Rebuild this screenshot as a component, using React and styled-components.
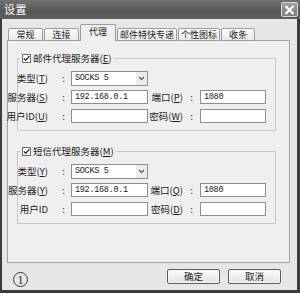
import React from "react";
import styled, { createGlobalStyle } from "styled-components";

const Global = createGlobalStyle`
    html, body {
        margin: 0;
        padding: 0;
    }
    body {
        width: 300px;
        height: 293px;
        overflow: hidden;
        background: #e6e6e6;
        font-family: "Noto Sans CJK SC", "Liberation Sans", sans-serif;
        color: #1c1c1c;
    }
`;

const Window = styled.div`
    width: 300px;
    height: 293px;
    display: flex;
    flex-direction: column;
    box-sizing: border-box;
`;

const TitleBar = styled.div`
    height: 19px;
    flex: none;
    display: flex;
    align-items: center;
    justify-content: space-between;
    padding: 0 2px 0 4px;
    background: linear-gradient(to bottom, #727272, #575757 60%, #5d5d5d);
    color: #fff;
`;

const Title = styled.span`
    font-size: 11px;
    line-height: 19px;
    letter-spacing: 0.5px;
`;

const CloseButton = styled.div`
    width: 17px;
    height: 15px;
    box-sizing: border-box;
    border: 1px solid #d8d8d8;
    border-radius: 2px;
    background: linear-gradient(to bottom, #a0a0a0, #7c7c7c);
    display: flex;
    align-items: center;
    justify-content: center;
`;

const Body = styled.div`
    flex: 1;
    display: flex;
    flex-direction: column;
    border-left: 2px solid #3c3c3c;
    border-right: 3px solid #3c3c3c;
    border-bottom: 3px solid #3c3c3c;
    padding: 5px 7px 0 5px;
    background: #e7e7e7;
`;

const TabStrip = styled.div`
    height: 17px;
    display: flex;
    align-items: flex-end;
    gap: 1px;
    padding-left: 1px;
    margin-bottom: -1px;
    position: relative;
    z-index: 1;
`;

const Tab = styled.div`
    width: ${p => p.w}px;
    height: ${p => (p.active ? 17 : 13)}px;
    box-sizing: border-box;
    border: 1px solid #9c9c9c;
    border-bottom: ${p => (p.active ? "none" : "1px solid #9c9c9c")};
    border-radius: 2px 2px 0 0;
    background: ${p => (p.active ? "#efefef" : "linear-gradient(to bottom, #fbfbfb, #e9e9e9)")};
    font-size: 9px;
    line-height: ${p => (p.active ? 13 : 11)}px;
    text-align: center;
    white-space: nowrap;
`;

const Panel = styled.div`
    height: 223px;
    box-sizing: border-box;
    border: 1px solid #a2a2a2;
    background: #efefef;
    padding: 11px 13px 0 9px;
    display: flex;
    flex-direction: column;
    gap: 14px;
`;

const Group = styled.fieldset`
    margin: 0;
    min-width: 0;
    border: 1px solid #c9c9c9;
    padding: 7px 0 7px 0;
    display: flex;
    flex-direction: column;
    gap: 5px;
`;

const Legend = styled.legend`
    margin-left: 2px;
    padding: 0 2px;
    height: 12px;
    display: flex;
    align-items: center;
    gap: 2px;
    font-size: 9.5px;
    line-height: 12px;
    background: #efefef;
`;

const CheckBox = styled.span`
    width: 9px;
    height: 9px;
    box-sizing: border-box;
    border: 1px solid #6c6c6c;
    background: #fff;
    display: inline-flex;
    align-items: center;
    justify-content: center;
`;

const Row = styled.div`
    height: 14px;
    display: flex;
    align-items: center;
`;

const Label = styled.div`
    width: ${p => p.w}px;
    flex: none;
    display: flex;
    justify-content: flex-end;
    white-space: nowrap;
    font-size: 9.5px;
    line-height: 14px;
`;

const Colon = styled.div`
    width: ${p => p.w}px;
    flex: none;
    box-sizing: border-box;
    padding-left: ${p => p.pad}px;
    text-align: center;
    font-size: 9.5px;
    line-height: 14px;
`;

const Input = styled.input`
    width: ${p => p.w}px;
    height: 14px;
    flex: none;
    box-sizing: border-box;
    margin: 0;
    border: 1px solid #8e8e8e;
    background: #fff;
    padding: 0 3px;
    font-family: "Liberation Mono", "DejaVu Sans Mono", monospace;
    font-size: 8.5px;
    letter-spacing: -0.3px;
    color: #1c1c1c;
    outline: none;
`;

const Select = styled.div`
    width: 77px;
    height: 15px;
    flex: none;
    box-sizing: border-box;
    border: 1px solid #8e8e8e;
    background: #fff;
    display: flex;
    align-items: center;
    justify-content: space-between;
    padding-left: 3px;
    font-family: "Liberation Mono", "DejaVu Sans Mono", monospace;
    font-size: 8.5px;
    letter-spacing: -0.3px;
`;

const DropButton = styled.span`
    width: 11px;
    height: 13px;
    background: #ececec;
    display: flex;
    align-items: center;
    justify-content: center;
`;

const Footer = styled.div`
    flex: 1;
    display: flex;
    align-items: flex-start;
    justify-content: space-between;
    padding: 6px 9px 0 6px;
`;

const Circled = styled.span`
    margin-top: 3px;
    width: 15px;
    height: 15px;
    box-sizing: border-box;
    border: 1px solid #3a3a3a;
    border-radius: 50%;
    display: flex;
    align-items: center;
    justify-content: center;
    font-family: "Liberation Serif", serif;
    font-size: 12px;
    line-height: 1;
    color: #2a2a2a;
`;

const Buttons = styled.div`
    display: flex;
    gap: 8px;
`;

const Button = styled.div`
    width: 53px;
    height: 15px;
    box-sizing: border-box;
    border: 1px solid #5c5c5c;
    border-radius: 2px;
    background: linear-gradient(to bottom, #fdfdfd, #e2e2e2);
    box-shadow: inset 0 0 0 1px #f6f6f6;
    text-align: center;
    font-size: 9.5px;
    line-height: 13px;
`;

const tabs = [
    { name: "常规", w: 35 },
    { name: "连接", w: 35 },
    { name: "代理", w: 36, active: true },
    { name: "邮件特快专递", w: 60 },
    { name: "个性图标", w: 42 },
    { name: "收条", w: 34 },
];

const mail = {
    title: "邮件代理服务器", key: "E",
    rows: [
        { label: "类型", k: "T", select: "SOCKS 5" },
        { label: "服务器", k: "S", value: "192.168.0.1", right: "端口", rk: "P", rvalue: "1080" },
        { label: "用户ID", k: "U", value: "", right: "密码", rk: "W", rvalue: "" },
    ],
};

const sms = {
    title: "短信代理服务器", key: "M",
    rows: [
        { label: "类型", k: "Y", select: "SOCKS 5" },
        { label: "服务器", k: "Y", value: "192.168.0.1", right: "端口", rk: "Q", rvalue: "1080" },
        { label: "用户ID", value: "", right: "密码", rk: "D", rvalue: "" },
    ],
};

const Key = ({ k }) => (k ? <span>(<u>{k}</u>)</span> : null);

const Check = () => (
    <CheckBox>
        <svg width="7" height="7" viewBox="0 0 7 7">
            <path d="M0.8 3.4 L2.7 5.4 L6.3 1.2" fill="none" stroke="#222" strokeWidth="1.3" />
        </svg>
    </CheckBox>
);

const ProxyGroup = ({ data }) => (
    <Group>
        <Legend>
            <Check />
            <span>{data.title}<Key k={data.key} /></span>
        </Legend>
        {data.rows.map((r, i) => (
            <Row key={i}>
                <Label w={30}>{r.label}<Key k={r.k} /></Label>
                <Colon w={23} pad={8}>:</Colon>
                {r.select ? (
                    <Select>
                        {r.select}
                        <DropButton>
                            <svg width="7" height="5" viewBox="0 0 7 5">
                                <path d="M1 1 L3.5 3.5 L6 1" fill="none" stroke="#555" strokeWidth="1.2" />
                            </svg>
                        </DropButton>
                    </Select>
                ) : (
                    <Input w={77} readOnly defaultValue={r.value} />
                )}
                {r.right && (
                    <>
                        <Label w={35}>{r.right}<Key k={r.rk} /></Label>
                        <Colon w={17} pad={0}>:</Colon>
                        <Input w={66} readOnly defaultValue={r.rvalue} />
                    </>
                )}
            </Row>
        ))}
    </Group>
);

export default function App() {
    return (
        <>
            <Global />
            <Window>
                <TitleBar>
                    <Title>设置</Title>
                    <CloseButton>
                        <svg width="11" height="10" viewBox="0 0 11 10">
                            <path d="M1.5 1 L9.5 9 M9.5 1 L1.5 9" stroke="#fff" strokeWidth="2.2" />
                        </svg>
                    </CloseButton>
                </TitleBar>
                <Body>
                    <TabStrip>
                        {tabs.map(t => (
                            <Tab key={t.name} w={t.w} active={t.active}>{t.name}</Tab>
                        ))}
                    </TabStrip>
                    <Panel>
                        <ProxyGroup data={mail} />
                        <ProxyGroup data={sms} />
                    </Panel>
                    <Footer>
                        <Circled>1</Circled>
                        <Buttons>
                            <Button>确定</Button>
                            <Button>取消</Button>
                        </Buttons>
                    </Footer>
                </Body>
            </Window>
        </>
    );
}
